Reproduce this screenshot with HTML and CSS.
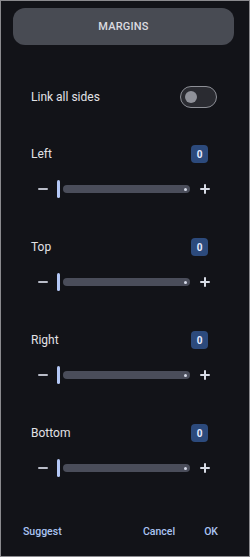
FILE: index.html
```html
<!DOCTYPE html>
<html lang="en">
<head>
    <meta charset="UTF-8">
    <meta name="viewport" content="width=device-width, initial-scale=1.0">
    <title>Margins</title>
    <link rel="stylesheet" href="styles.css">
</head>
<body>
    <div class="dialog">
        <div class="title-button">MARGINS</div>

        <div class="link-row">
            <span class="label">Link all sides</span>
            <div class="toggle"><div class="knob"></div></div>
        </div>

        <div class="side first">
            <div class="side-head">
                <span class="label">Left</span>
                <span class="badge">0</span>
            </div>
            <div class="slider-row">
                <span class="minus"></span>
                <span class="thumb"></span>
                <div class="track"><span class="dot"></span></div>
                <span class="plus"></span>
            </div>
        </div>

        <div class="side">
            <div class="side-head">
                <span class="label">Top</span>
                <span class="badge">0</span>
            </div>
            <div class="slider-row">
                <span class="minus"></span>
                <span class="thumb"></span>
                <div class="track"><span class="dot"></span></div>
                <span class="plus"></span>
            </div>
        </div>

        <div class="side">
            <div class="side-head">
                <span class="label">Right</span>
                <span class="badge">0</span>
            </div>
            <div class="slider-row">
                <span class="minus"></span>
                <span class="thumb"></span>
                <div class="track"><span class="dot"></span></div>
                <span class="plus"></span>
            </div>
        </div>

        <div class="side">
            <div class="side-head">
                <span class="label">Bottom</span>
                <span class="badge">0</span>
            </div>
            <div class="slider-row">
                <span class="minus"></span>
                <span class="thumb"></span>
                <div class="track"><span class="dot"></span></div>
                <span class="plus"></span>
            </div>
        </div>

        <div class="footer">
            <span class="action suggest">Suggest</span>
            <span class="action cancel">Cancel</span>
            <span class="action ok">OK</span>
        </div>
    </div>
</body>
</html>
```

FILE: styles.css
```css
* {
    box-sizing: border-box;
}
body {
    margin: 0;
    padding: 0;
    background-color: #121318;
    font-family: Roboto, "Liberation Sans", Arial, sans-serif;
    color: #e2e2e6;
}
.dialog {
    width: 250px;
    height: 557px;
    border: 1px solid #8a8a8e;
    background-color: #121318;
    position: relative;
    display: flex;
    flex-direction: column;
}
.title-button {
    margin: 7px 15px 0 12px;
    height: 37px;
    border-radius: 12px;
    background-color: #484b53;
    color: #dcdce0;
    font-size: 11px;
    font-weight: 500;
    letter-spacing: 0.2px;
    display: flex;
    align-items: center;
    justify-content: center;
}
.link-row {
    margin-top: 41px;
    height: 22px;
    padding: 0 32px 0 30px;
    display: flex;
    align-items: center;
    justify-content: space-between;
}
.label {
    font-size: 12px;
    color: #e2e2e6;
}
.toggle {
    width: 37px;
    height: 22px;
    border-radius: 11px;
    border: 1.5px solid #8d8f96;
    background-color: #2a2b31;
    display: flex;
    align-items: center;
    padding-left: 4px;
}
.knob {
    width: 12px;
    height: 12px;
    border-radius: 50%;
    background-color: #8f9199;
}
.side {
    margin-top: 39px;
}
.side.first {
    margin-top: 37px;
}
.side-head {
    height: 18px;
    padding: 0 41px 0 30px;
    display: flex;
    align-items: center;
    justify-content: space-between;
}
.badge {
    width: 17px;
    height: 18px;
    border-radius: 4px;
    background-color: #2c4a7c;
    color: #e6ecff;
    font-size: 10px;
    font-weight: 700;
    display: flex;
    align-items: center;
    justify-content: center;
}
.slider-row {
    margin-top: 16px;
    height: 20px;
    padding-left: 37px;
    display: flex;
    align-items: center;
}
.minus {
    width: 10px;
    height: 2px;
    border-radius: 1px;
    background-color: #b9bdc8;
}
.thumb {
    margin-left: 9px;
    width: 3px;
    height: 18px;
    border-radius: 2px;
    background-color: #b4c8f6;
}
.track {
    margin-left: 3px;
    width: 127px;
    height: 8px;
    border-radius: 4px;
    background-color: #4a4d5a;
    display: flex;
    align-items: center;
    justify-content: flex-end;
    padding-right: 3px;
}
.dot {
    width: 3px;
    height: 3px;
    border-radius: 50%;
    background-color: #d6dbe8;
}
.plus {
    margin-left: 10px;
    width: 10px;
    height: 10px;
    position: relative;
}
.plus::before,
.plus::after {
    content: "";
    position: absolute;
    background-color: #d8dce6;
    border-radius: 1px;
}
.plus::before {
    left: 0;
    top: 4px;
    width: 10px;
    height: 2px;
}
.plus::after {
    left: 4px;
    top: 0;
    width: 2px;
    height: 10px;
}
.footer {
    margin-top: auto;
    margin-bottom: 17px;
    height: 16px;
    display: flex;
    align-items: center;
    padding: 0 31px 0 22px;
}
.action {
    font-size: 10.5px;
    font-weight: 500;
    color: #aac3f2;
}
.cancel {
    margin-left: auto;
}
.ok {
    margin-left: 29px;
}
```
